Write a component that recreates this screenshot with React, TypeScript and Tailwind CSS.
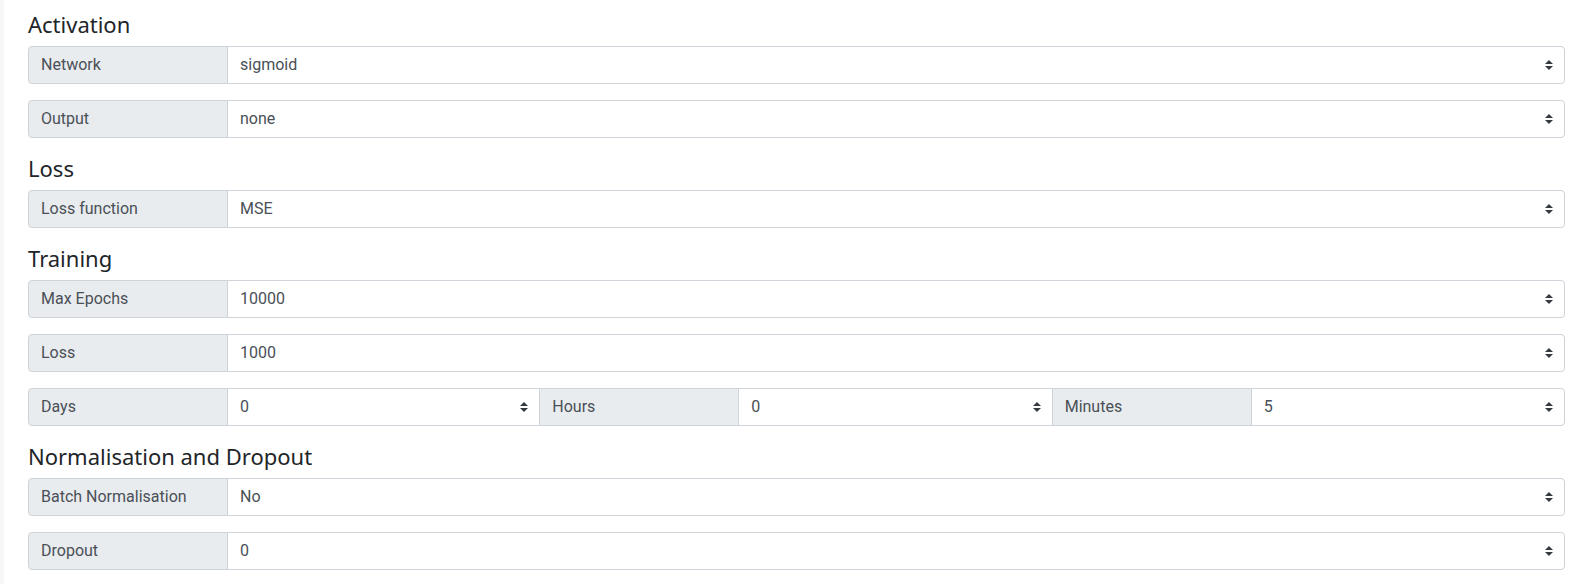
import React from 'react';

type Field = { label: string; value: string; options?: string[] };

const font = { label: "font-['Roboto','Liberation_Sans',sans-serif]" };

const Arrows = () => (
  <svg
    viewBox="0 0 4 5"
    className="pointer-events-none absolute right-3 top-1/2 h-[10px] w-[8px] -translate-y-1/2"
  >
    <path fill="#343a40" d="M2 0L0 2h4zm0 5L0 3h4z" />
  </svg>
);

const InputGroup: React.FC<Field & { first?: boolean; last?: boolean }> = ({
  label,
  value,
  options,
  first = true,
  last = true,
}) => (
  <div className={`flex min-w-0 flex-1 ${first ? '' : '-ml-px'}`}>
    <span
      className={`flex h-[38px] w-[200px] shrink-0 items-center border border-[#ced4da] bg-[#e9ecef] px-3 text-[16px] text-[#495057] ${font.label} ${
        first ? 'rounded-l-[4px]' : ''
      }`}
    >
      {label}
    </span>
    <div className="relative -ml-px min-w-0 flex-1">
      <select
        defaultValue={value}
        className={`block h-[38px] w-full appearance-none border border-[#ced4da] bg-white py-1.5 pl-3 pr-7 text-[16px] text-[#495057] outline-none ${font.label} ${
          last ? 'rounded-r-[4px]' : ''
        }`}
      >
        {(options ?? [value]).map((o) => (
          <option key={o}>{o}</option>
        ))}
      </select>
      <Arrows />
    </div>
  </div>
);

const Heading: React.FC<{ children: React.ReactNode }> = ({ children }) => (
  <h4 className="mb-2 text-[22px] font-normal leading-[28px] text-[#212529] font-['Noto_Sans','Open_Sans',sans-serif]">
    {children}
  </h4>
);

export default function App() {
  return (
    <div className="flex min-h-[584px] w-full bg-white">
      <div className="w-[4px] shrink-0 bg-[#f5f6f8]" />
      <div className="flex-1 pl-[24px] pr-[21px] pt-[10px]">
        <Heading>Activation</Heading>
        <div className="mb-4 flex">
          <InputGroup label="Network" value="sigmoid" options={['sigmoid', 'relu', 'tanh', 'none']} />
        </div>
        <div className="mb-4 flex">
          <InputGroup label="Output" value="none" options={['none', 'sigmoid', 'softmax']} />
        </div>

        <Heading>Loss</Heading>
        <div className="mb-4 flex">
          <InputGroup label="Loss function" value="MSE" options={['MSE', 'MAE', 'Cross entropy']} />
        </div>

        <Heading>Training</Heading>
        <div className="mb-4 flex">
          <InputGroup label="Max Epochs" value="10000" options={['1000', '10000', '100000']} />
        </div>
        <div className="mb-4 flex">
          <InputGroup label="Loss" value="1000" options={['100', '1000', '10000']} />
        </div>
        <div className="mb-4 grid grid-cols-3">
          <InputGroup label="Days" value="0" last={false} />
          <InputGroup label="Hours" value="0" first={false} last={false} />
          <InputGroup label="Minutes" value="5" first={false} />
        </div>

        <Heading>Normalisation and Dropout</Heading>
        <div className="mb-4 flex">
          <InputGroup label="Batch Normalisation" value="No" options={['No', 'Yes']} />
        </div>
        <div className="mb-4 flex">
          <InputGroup label="Dropout" value="0" options={['0', '0.1', '0.2', '0.5']} />
        </div>
      </div>
    </div>
  );
}
